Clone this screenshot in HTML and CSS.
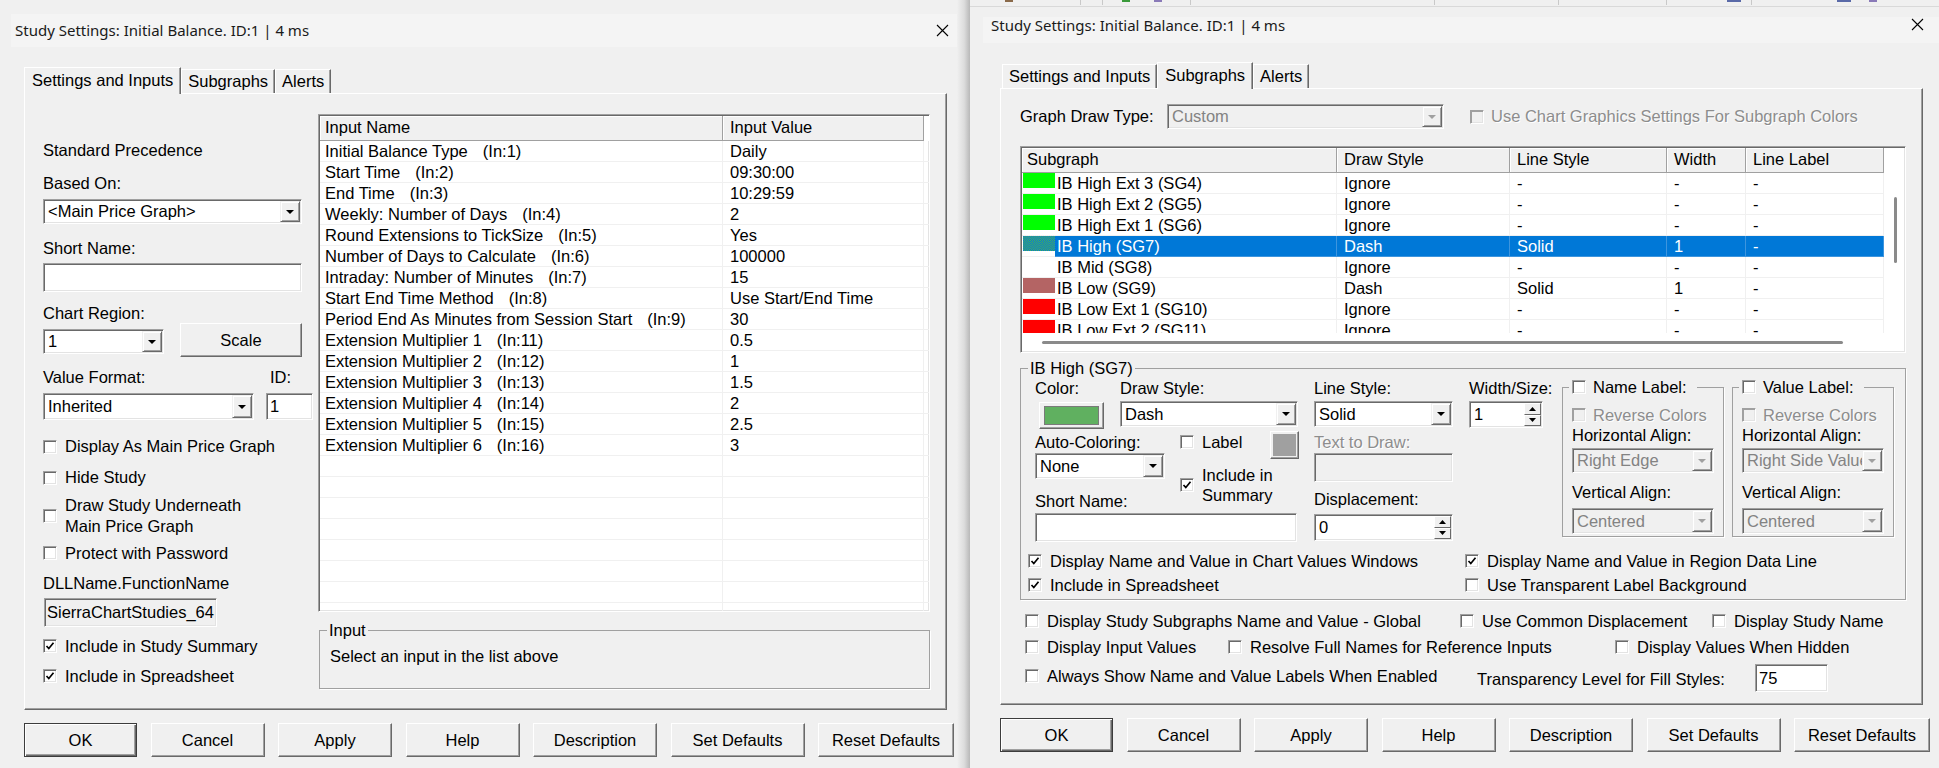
FILE: index.html
```html
<!DOCTYPE html>
<html>
<head>
<meta charset="utf-8">
<title>Study Settings</title>
<link rel="stylesheet" href="styles.css">
</head>
<body>
<div class="desk">
  <!-- left dialog: Settings and Inputs -->
  <div class="dlg dlg-left">
    <div class="titlebar">
      <span>Study Settings: Initial Balance. ID:1 | 4 ms</span>
      <span class="close"><svg width="13" height="13" viewBox="0 0 13 13"><path d="M1 1L12 12M12 1L1 12" stroke="#000" stroke-width="1.1"/></svg></span>
    </div>
    <div class="tabs">
      <div class="tab on">Settings and Inputs</div>
      <div class="tab">Subgraphs</div>
      <div class="tab">Alerts</div>
    </div>
    <div class="panel">
      <div class="lcol">
        <div>Standard Precedence</div>
        <div class="l-based">Based On:</div>
        <div class="combo sunk c-based"><div class="val">&lt;Main Price Graph&gt;</div><div class="dd"><svg width="8" height="4" viewBox="0 0 8 4"><path d="M0 0h8L4 4z"/></svg></div></div>
        <div class="l-short">Short Name:</div>
        <div class="field sunk f-short"></div>
        <div class="l-region">Chart Region:</div>
        <div class="region-row">
          <div class="combo sunk c-region"><div class="val">1</div><div class="dd"><svg width="8" height="4" viewBox="0 0 8 4"><path d="M0 0h8L4 4z"/></svg></div></div>
          <div class="btn b-scale">Scale</div>
        </div>
        <div class="fmt-lbls"><span class="l-fmt">Value Format:</span><span>ID:</span></div>
        <div class="fmt-row">
          <div class="combo sunk c-fmt"><div class="val">Inherited</div><div class="dd"><svg width="8" height="4" viewBox="0 0 8 4"><path d="M0 0h8L4 4z"/></svg></div></div>
          <div class="field sunk f-id">1</div>
        </div>
        <div class="chk k-main"><span class="cb"></span>Display As Main Price Graph</div>
        <div class="chk k-hide"><span class="cb"></span>Hide Study</div>
        <div class="chk k-under"><span class="cb"></span><span>Draw Study Underneath<br>Main Price Graph</span></div>
        <div class="chk k-pass"><span class="cb"></span>Protect with Password</div>
        <div class="l-dll">DLLName.FunctionName</div>
        <div class="field sunk f-dll">SierraChartStudies_64</div>
        <div class="chk k-summ"><span class="cb"><svg width="10" height="10" viewBox="0 0 10 10"><path d="M1.5 5l2.3 2.5L8.5 1.8" fill="none" stroke="#000" stroke-width="1.7"/></svg></span>Include in Study Summary</div>
        <div class="chk k-sheet"><span class="cb"><svg width="10" height="10" viewBox="0 0 10 10"><path d="M1.5 5l2.3 2.5L8.5 1.8" fill="none" stroke="#000" stroke-width="1.7"/></svg></span>Include in Spreadsheet</div>
      </div>
      <div class="rcol">
        <div class="list sunk in-list">
          <div class="lhead"><div>Input Name</div><div>Input Value</div><div class="blank"></div></div>
          <div class="lrow"><div>Initial Balance Type<span class="inn">(In:1)</span></div><div>Daily</div><div></div></div>
          <div class="lrow"><div>Start Time<span class="inn">(In:2)</span></div><div>09:30:00</div><div></div></div>
          <div class="lrow"><div>End Time<span class="inn">(In:3)</span></div><div>10:29:59</div><div></div></div>
          <div class="lrow"><div>Weekly: Number of Days<span class="inn">(In:4)</span></div><div>2</div><div></div></div>
          <div class="lrow"><div>Round Extensions to TickSize<span class="inn">(In:5)</span></div><div>Yes</div><div></div></div>
          <div class="lrow"><div>Number of Days to Calculate<span class="inn">(In:6)</span></div><div>100000</div><div></div></div>
          <div class="lrow"><div>Intraday: Number of Minutes<span class="inn">(In:7)</span></div><div>15</div><div></div></div>
          <div class="lrow"><div>Start End Time Method<span class="inn">(In:8)</span></div><div>Use Start/End Time</div><div></div></div>
          <div class="lrow"><div>Period End As Minutes from Session Start<span class="inn">(In:9)</span></div><div>30</div><div></div></div>
          <div class="lrow"><div>Extension Multiplier 1<span class="inn">(In:11)</span></div><div>0.5</div><div></div></div>
          <div class="lrow"><div>Extension Multiplier 2<span class="inn">(In:12)</span></div><div>1</div><div></div></div>
          <div class="lrow"><div>Extension Multiplier 3<span class="inn">(In:13)</span></div><div>1.5</div><div></div></div>
          <div class="lrow"><div>Extension Multiplier 4<span class="inn">(In:14)</span></div><div>2</div><div></div></div>
          <div class="lrow"><div>Extension Multiplier 5<span class="inn">(In:15)</span></div><div>2.5</div><div></div></div>
          <div class="lrow"><div>Extension Multiplier 6<span class="inn">(In:16)</span></div><div>3</div><div></div></div>
          <div class="lrow"><div></div><div></div><div></div></div>
          <div class="lrow"><div></div><div></div><div></div></div>
          <div class="lrow"><div></div><div></div><div></div></div>
          <div class="lrow"><div></div><div></div><div></div></div>
          <div class="lrow"><div></div><div></div><div></div></div>
          <div class="lrow"><div></div><div></div><div></div></div>
          <div class="lrow"><div></div><div></div><div></div></div>
          <div class="lrow"><div></div><div></div><div></div></div>
        </div>
        <fieldset class="grp in-grp">
          <legend>Input</legend>
          <div class="in-help">Select an input in the list above</div>
        </fieldset>
      </div>
    </div>
    <div class="btns">
      <div class="btn def b-ok">OK</div>
      <div class="btn b-std">Cancel</div>
      <div class="btn b-std">Apply</div>
      <div class="btn b-std">Help</div>
      <div class="btn b-desc">Description</div>
      <div class="btn b-set">Set Defaults</div>
      <div class="btn b-reset">Reset Defaults</div>
    </div>
  </div>

  <div class="wshadow"></div>

  <!-- right dialog: Subgraphs -->
  <div class="dlg dlg-right">
    <div class="appbar">
      <i class="ab ab-brown"></i><i class="ab-sep s1"></i><i class="ab-sep s2"></i><i class="ab ab-green"></i><i class="ab ab-purple"></i><i class="ab-sep s3"></i><i class="ab-sep s4"></i><i class="ab-sep s5"></i><i class="ab-sep s6"></i><i class="ab ab-blue b1"></i><i class="ab-sep s7"></i><i class="ab ab-blue b2"></i><i class="ab ab-purple p2"></i>
    </div>
    <div class="titlebar">
      <span>Study Settings: Initial Balance. ID:1 | 4 ms</span>
      <span class="close"><svg width="13" height="13" viewBox="0 0 13 13"><path d="M1 1L12 12M12 1L1 12" stroke="#000" stroke-width="1.1"/></svg></span>
    </div>
    <div class="tabs">
      <div class="tab">Settings and Inputs</div>
      <div class="tab on">Subgraphs</div>
      <div class="tab">Alerts</div>
    </div>
    <div class="panel">
      <div class="gdt">
        <div class="gdt-lbl">Graph Draw Type:</div>
        <div class="combo sunk off c-gdt"><div class="val">Custom</div><div class="dd"><svg width="8" height="4" viewBox="0 0 8 4"><path d="M0 0h8L4 4z" fill="#a0a0a0"/></svg></div></div>
        <div class="chk dis gdt-chk"><span class="cb"></span>Use Chart Graphics Settings For Subgraph Colors</div>
      </div>

      <div class="list sunk sg-list">
        <div class="sg-main">
          <div class="sg-cols">
            <div class="shead"><div>Subgraph</div><div>Draw Style</div><div>Line Style</div><div>Width</div><div>Line Label</div></div>
            <div class="srow"><div class="swc"><i class="sw sw-green"></i></div><div class="nm">IB High Ext 3 (SG4)</div><div>Ignore</div><div>-</div><div>-</div><div>-</div></div>
            <div class="srow"><div class="swc"><i class="sw sw-green"></i></div><div class="nm">IB High Ext 2 (SG5)</div><div>Ignore</div><div>-</div><div>-</div><div>-</div></div>
            <div class="srow"><div class="swc"><i class="sw sw-green"></i></div><div class="nm">IB High Ext 1 (SG6)</div><div>Ignore</div><div>-</div><div>-</div><div>-</div></div>
            <div class="srow sel"><div class="swc"><i class="sw sw-dith"></i></div><div class="nm">IB High (SG7)</div><div>Dash</div><div>Solid</div><div>1</div><div>-</div></div>
            <div class="srow"><div class="swc"></div><div class="nm">IB Mid (SG8)</div><div>Ignore</div><div>-</div><div>-</div><div>-</div></div>
            <div class="srow"><div class="swc"><i class="sw sw-rose"></i></div><div class="nm">IB Low (SG9)</div><div>Dash</div><div>Solid</div><div>1</div><div>-</div></div>
            <div class="srow"><div class="swc"><i class="sw sw-red"></i></div><div class="nm">IB Low Ext 1 (SG10)</div><div>Ignore</div><div>-</div><div>-</div><div>-</div></div>
            <div class="srow"><div class="swc"><i class="sw sw-red"></i></div><div class="nm">IB Low Ext 2 (SG11)</div><div>Ignore</div><div>-</div><div>-</div><div>-</div></div>
          </div>
          <div class="vscroll"><div class="vthumb"></div></div>
        </div>
        <div class="hscroll"><div class="hthumb"></div></div>
      </div>

      <fieldset class="grp sg-grp">
        <legend>IB High (SG7)</legend>
        <div class="sg-grid">
          <div class="g-color-l">Color:</div>
          <div class="btn g-color"><i></i></div>
          <div class="g-draw-l">Draw Style:</div>
          <div class="combo sunk g-draw"><div class="val">Dash</div><div class="dd"><svg width="8" height="4" viewBox="0 0 8 4"><path d="M0 0h8L4 4z"/></svg></div></div>
          <div class="g-line-l">Line Style:</div>
          <div class="combo sunk g-line"><div class="val">Solid</div><div class="dd"><svg width="8" height="4" viewBox="0 0 8 4"><path d="M0 0h8L4 4z"/></svg></div></div>
          <div class="g-wid-l">Width/Size:</div>
          <div class="spin sunk g-wid"><div class="val">1</div><div class="ud"><span><svg width="7" height="4" viewBox="0 0 7 4"><path d="M0 4h7L3.5 0z"/></svg></span><span><svg width="7" height="4" viewBox="0 0 7 4"><path d="M0 0h7L3.5 4z"/></svg></span></div></div>

          <div class="g-auto-l">Auto-Coloring:</div>
          <div class="chk g-label"><span class="cb"></span>Label</div>
          <div class="btn g-gray"><i></i></div>
          <div class="dis g-text-l">Text to Draw:</div>
          <div class="combo sunk g-auto"><div class="val">None</div><div class="dd"><svg width="8" height="4" viewBox="0 0 8 4"><path d="M0 0h8L4 4z"/></svg></div></div>
          <div class="chk g-incl"><span class="cb"><svg width="10" height="10" viewBox="0 0 10 10"><path d="M1.5 5l2.3 2.5L8.5 1.8" fill="none" stroke="#000" stroke-width="1.7"/></svg></span><span>Include in<br>Summary</span></div>
          <div class="field sunk off g-text"></div>

          <div class="g-short-l">Short Name:</div>
          <div class="g-disp-l">Displacement:</div>
          <div class="field sunk g-short"></div>
          <div class="spin sunk g-disp"><div class="val">0</div><div class="ud"><span><svg width="7" height="4" viewBox="0 0 7 4"><path d="M0 4h7L3.5 0z"/></svg></span><span><svg width="7" height="4" viewBox="0 0 7 4"><path d="M0 0h7L3.5 4z"/></svg></span></div></div>

          <fieldset class="grp lbox g-name">
            <legend><span class="cb"></span>Name Label:</legend>
            <div class="chk dis rev"><span class="cb"></span>Reverse Colors</div>
            <div class="ha-l">Horizontal Align:</div>
            <div class="combo sunk off ha"><div class="val">Right Edge</div><div class="dd"><svg width="8" height="4" viewBox="0 0 8 4"><path d="M0 0h8L4 4z" fill="#a0a0a0"/></svg></div></div>
            <div class="va-l">Vertical Align:</div>
            <div class="combo sunk off va"><div class="val">Centered</div><div class="dd"><svg width="8" height="4" viewBox="0 0 8 4"><path d="M0 0h8L4 4z" fill="#a0a0a0"/></svg></div></div>
          </fieldset>
          <fieldset class="grp lbox g-value">
            <legend><span class="cb"></span>Value Label:</legend>
            <div class="chk dis rev"><span class="cb"></span>Reverse Colors</div>
            <div class="ha-l">Horizontal Align:</div>
            <div class="combo sunk off ha"><div class="val">Right Side Value</div><div class="dd"><svg width="8" height="4" viewBox="0 0 8 4"><path d="M0 0h8L4 4z" fill="#a0a0a0"/></svg></div></div>
            <div class="va-l">Vertical Align:</div>
            <div class="combo sunk off va"><div class="val">Centered</div><div class="dd"><svg width="8" height="4" viewBox="0 0 8 4"><path d="M0 0h8L4 4z" fill="#a0a0a0"/></svg></div></div>
          </fieldset>
        </div>
        <div class="sg-checks">
          <div class="chk"><span class="cb"><svg width="10" height="10" viewBox="0 0 10 10"><path d="M1.5 5l2.3 2.5L8.5 1.8" fill="none" stroke="#000" stroke-width="1.7"/></svg></span>Display Name and Value in Chart Values Windows</div>
          <div class="chk"><span class="cb"><svg width="10" height="10" viewBox="0 0 10 10"><path d="M1.5 5l2.3 2.5L8.5 1.8" fill="none" stroke="#000" stroke-width="1.7"/></svg></span>Display Name and Value in Region Data Line</div>
          <div class="chk"><span class="cb"><svg width="10" height="10" viewBox="0 0 10 10"><path d="M1.5 5l2.3 2.5L8.5 1.8" fill="none" stroke="#000" stroke-width="1.7"/></svg></span>Include in Spreadsheet</div>
          <div class="chk"><span class="cb"></span>Use Transparent Label Background</div>
        </div>
      </fieldset>

      <div class="opts o1">
        <div class="chk"><span class="cb"></span>Display Study Subgraphs Name and Value - Global</div>
        <div class="chk"><span class="cb"></span>Use Common Displacement</div>
        <div class="chk"><span class="cb"></span>Display Study Name</div>
      </div>
      <div class="opts o2">
        <div class="chk"><span class="cb"></span>Display Input Values</div>
        <div class="chk"><span class="cb"></span>Resolve Full Names for Reference Inputs</div>
        <div class="chk"><span class="cb"></span>Display Values When Hidden</div>
      </div>
      <div class="opts o3">
        <div class="chk"><span class="cb"></span>Always Show Name and Value Labels When Enabled</div>
        <div class="tl">Transparency Level for Fill Styles:</div>
        <div class="field sunk f-trans">75</div>
      </div>
    </div>
    <div class="btns">
      <div class="btn def b-ok">OK</div>
      <div class="btn b-std">Cancel</div>
      <div class="btn b-std">Apply</div>
      <div class="btn b-std">Help</div>
      <div class="btn b-desc">Description</div>
      <div class="btn b-set">Set Defaults</div>
      <div class="btn b-reset">Reset Defaults</div>
    </div>
  </div>
</div>
</body>
</html>
```

FILE: styles.css
```css
*{
	margin: 0;
	padding: 0;
	box-sizing: border-box;
}
body{
	width: 1939px;
	height: 768px;
	overflow: hidden;
	background: #f0f0f0;
	color: #000;
	font-family: "Liberation Sans", Arial, sans-serif;
	font-size: 16.5px;
	line-height: 19px;
}
.desk{
	display: flex;
	height: 768px;
}
.dlg{
	flex: none;
	height: 768px;
}
.dlg-left{
	width: 957px;
}
.dlg-right{
	width: 969px;
}
.wshadow{
	flex: none;
	width: 13px;
	background: linear-gradient(to right, #f0f0f0, #dcdcdc 55%, #b8b8b8);
}

/* title bars */
.titlebar{
	display: flex;
	justify-content: space-between;
	background: #f4f4f4;
	font-family: "Noto Sans", "Liberation Sans", sans-serif;
	font-size: 15px;
	color: #1a1a1a;
}
.dlg-left .titlebar{
	margin: 14px 0 0 11px;
	height: 33px;
	align-items: center;
	padding-left: 4px;
}
.dlg-right .titlebar{
	margin: 10px 0 0 13px;
	height: 26px;
	align-items: flex-start;
	padding-left: 8px;
	line-height: 17px;
}
.close{
	display: flex;
	justify-content: center;
	width: 30px;
}
.dlg-right .close{
	width: 44px;
	padding-top: 1px;
}

/* strip of the app behind the right dialog */
.appbar{
	display: flex;
	align-items: flex-start;
	height: 7px;
	border-bottom: 1px solid #d9d9d9;
}
.appbar i{
	display: block;
	flex: none;
}
.ab{
	width: 8px;
	height: 2px;
}
.ab-sep{
	width: 1px;
	height: 5px;
	background: #c9c9c9;
}
.ab-brown{ background: #8a6a4a; margin-left: 35px; }
.s1{ margin-left: 67px; }
.s2{ margin-left: 21px; }
.ab-green{ background: #3a9a3a; margin-left: 19px; }
.ab-purple{ background: #8a7ab8; margin-left: 24px; }
.s3{ margin-left: 28px; }
.s4{ margin-left: 243px; }
.s5{ margin-left: 123px; }
.s6{ margin-left: 107px; }
.ab-blue{ background: #5a6aa8; width: 14px; }
.b1{ margin-left: 60px; }
.s7{ margin-left: 10px; }
.b2{ margin-left: 85px; }
.p2{ margin-left: 18px; }

/* tabs */
.tabs{
	display: flex;
	align-items: flex-end;
	height: 26px;
	position: relative;
	z-index: 1;
}
.dlg-left .tabs{
	margin: 20px 0 0 24px;
}
.dlg-right .tabs{
	margin: 19px 0 0 32px;
}
.tab{
	height: 24px;
	padding: 0 6px;
	line-height: 23px;
	white-space: nowrap;
	border: 1px solid;
	border-bottom: 0;
	border-color: #fff #696969 #fff #fff;
	box-shadow: inset -1px 0 #a0a0a0;
}
.tab.on{
	height: 27px;
	margin-bottom: -1px;
	padding: 1px 7px 0;
	background: #f0f0f0;
}

/* tab page */
.panel{
	width: 923px;
	height: 617px;
	border: 1px solid;
	border-color: #fff #696969 #696969 #fff;
	box-shadow: inset -1px -1px #a0a0a0;
}
.dlg-left .panel{
	margin-left: 24px;
	display: flex;
}
.dlg-right .panel{
	margin-left: 30px;
	padding-left: 19px;
}

/* bottom buttons */
.btns{
	display: flex;
	gap: 13.5px;
	margin-top: 13px;
}
.dlg-left .btns{ margin-left: 24px; }
.dlg-right .btns{ margin-left: 30px; }
.btn{
	display: flex;
	align-items: center;
	justify-content: center;
	height: 34px;
	background: #f0f0f0;
	border: 1px solid;
	border-color: #fff #696969 #696969 #fff;
	box-shadow: inset -1px -1px #a0a0a0;
	white-space: nowrap;
}
.btn.def{
	border-color: #3c3c3c;
	box-shadow: inset 1px 1px #fff, inset -1px -1px #696969, inset -2px -2px #a0a0a0;
}
.b-ok{ width: 113px; }
.b-std{ width: 114px; }
.b-desc{ width: 124px; }
.b-set{ width: 134px; }
.b-reset{ width: 136px; }

/* sunken controls */
.sunk{
	border: 1px solid;
	border-color: #a0a0a0 #fff #fff #a0a0a0;
	box-shadow: inset 1px 1px #696969, inset -1px -1px #e3e3e3;
	padding: 1px;
	background: #fff;
}
.combo, .spin{
	display: flex;
	align-items: stretch;
}
.combo .val, .spin .val{
	flex: 1;
	display: flex;
	align-items: center;
	padding-left: 3px;
	white-space: nowrap;
	overflow: hidden;
}
.combo .dd{
	flex: none;
	width: 20px;
	display: flex;
	align-items: center;
	justify-content: center;
	background: #f0f0f0;
	border: 1px solid;
	border-color: #f0f0f0 #696969 #696969 #f0f0f0;
	box-shadow: inset 1px 1px #fff, inset -1px -1px #a0a0a0;
}
.combo.off, .field.off{
	background: #f0f0f0;
	color: #838383;
}
.spin .ud{
	flex: none;
	width: 17px;
	display: flex;
	flex-direction: column;
}
.spin .ud span{
	flex: 1;
	display: flex;
	align-items: center;
	justify-content: center;
	background: #f0f0f0;
	border: 1px solid;
	border-color: #fff #696969 #696969 #fff;
}
.field{
	display: flex;
	align-items: center;
	padding-left: 3px;
	white-space: nowrap;
	overflow: hidden;
}

/* checkboxes */
.chk{
	display: flex;
	align-items: center;
	gap: 8px;
	white-space: nowrap;
}
.cb{
	flex: none;
	width: 14px;
	height: 14px;
	display: flex;
	align-items: center;
	justify-content: center;
	background: #fff;
	border: 1px solid;
	border-color: #a0a0a0 #fff #fff #a0a0a0;
	box-shadow: inset 1px 1px #696969, inset -1px -1px #e3e3e3;
}
.dis{
	color: #8d8d8d;
	text-shadow: 1px 1px #fff;
}
.dis .cb{
	background: #f0f0f0;
	box-shadow: inset 1px 1px #a0a0a0, inset -1px -1px #e3e3e3;
}

/* group boxes */
.grp{
	border: 1px solid #a0a0a0;
	box-shadow: 1px 1px 0 #fff;
}
.grp legend{
	padding: 0 2px;
	line-height: 19px;
}

/* left page, left column */
.lcol{
	flex: none;
	width: 275px;
	margin-left: 18px;
	padding-top: 46.5px;
	display: flex;
	flex-direction: column;
	align-items: flex-start;
}
.l-based{ margin-top: 14px; }
.c-based{ width: 259px; height: 25px; margin-top: 6.5px; }
.l-short{ margin-top: 14.5px; }
.f-short{ width: 259px; height: 29px; margin-top: 5.5px; }
.l-region{ margin-top: 11.5px; }
.region-row{
	display: flex;
	align-items: flex-start;
	margin-top: 0.5px;
}
.c-region{ width: 121px; height: 25px; margin-top: 6px; }
.b-scale{ width: 122px; margin-left: 16px; }
.fmt-lbls{
	display: flex;
	margin-top: 11px;
}
.l-fmt{ width: 227px; }
.fmt-row{
	display: flex;
	margin-top: 6px;
}
.c-fmt{ width: 211px; height: 27px; }
.f-id{ width: 47px; height: 27px; margin-left: 12px; }
.k-main{ margin-top: 17px; }
.k-hide{ margin-top: 12px; }
.k-under{ margin-top: 8px; line-height: 20.5px; }
.k-pass{ margin-top: 7.5px; }
.l-dll{ margin-top: 11px; }
.f-dll{ width: 173px; height: 29px; margin: 5.5px 0 0 1px; padding-left: 2px; background: #f0f0f0; }
.k-summ{ margin-top: 9.5px; }
.k-sheet{ margin-top: 11px; }

/* left page, inputs list */
.rcol{
	flex: none;
	width: 612px;
	margin-top: 20px;
}
.list{
	overflow: hidden;
}
.in-list{
	height: 498px;
}
.lhead, .lrow{
	display: grid;
	grid-template-columns: 403px 201px 1fr;
}
.lhead{
	height: 25px;
}
.lhead div, .shead div{
	background: #f0f0f0;
	border-right: 1px solid #a0a0a0;
	border-bottom: 1px solid #a0a0a0;
	box-shadow: inset 1px 1px #fff;
	padding-left: 7px;
	line-height: 23px;
	white-space: nowrap;
}
.lhead div:first-child, .shead div:first-child{
	padding-left: 5px;
}
.lhead .blank{
	background: #fff;
	border: 0;
	box-shadow: none;
}
.lrow{
	height: 21px;
}
.lrow div, .srow div{
	border-right: 1px solid #f0f0f0;
	border-bottom: 1px solid #f0f0f0;
	padding-left: 7px;
	line-height: 20px;
	white-space: nowrap;
	overflow: hidden;
}
.lrow div:first-child{
	padding-left: 5px;
}
.inn{
	margin-left: 15px;
}
.in-grp{
	width: 611px;
	height: 68px;
	margin: 8.5px 0 0 1px;
	padding: 0 7px;
}
.in-help{
	padding: 7px 0 0 3px;
}

/* right page */
.gdt{
	display: flex;
	align-items: center;
	height: 25px;
	margin-top: 15px;
}
.gdt-lbl{ width: 147px; }
.c-gdt{ width: 277px; height: 25px; }
.gdt-chk{ margin-left: 26px; gap: 7px; }

.sg-list{
	width: 886px;
	height: 207px;
	margin-top: 17px;
}
.sg-main{
	display: flex;
	height: 185px;
}
.sg-cols{
	flex: none;
	width: 862px;
	overflow: hidden;
}
.shead{
	display: grid;
	grid-template-columns: 315px 173px 157px 79px 138px;
	height: 25px;
}
.srow{
	display: grid;
	grid-template-columns: 33px 282px 173px 157px 79px 138px;
	height: 21px;
}
.srow .swc{
	padding-left: 1px;
	border-right: 0;
}
.srow .nm{
	padding-left: 2px;
}
.sw{
	display: block;
	width: 32px;
	height: 15px;
}
.sw-green{ background: #00ff00; }
.sw-red{ background: #ff0000; }
.sw-rose{ background: #b46464; }
.sw-dith{ background: repeating-conic-gradient(#40b060 0 25%, #0a78d0 0 50%) 0 0 / 2px 2px; }
.srow.sel div:not(.swc){
	background: #0078d7;
	color: #fff;
	border-color: #3d95de;
}
.vscroll{
	flex: 1;
}
.vthumb{
	width: 3px;
	height: 66px;
	margin: 49px 0 0 10px;
	background: #8a8a8a;
	border-radius: 2px;
}
.hscroll{
	height: 18px;
	padding: 8px 0 0 20px;
}
.hthumb{
	width: 801px;
	height: 3px;
	background: #8a8a8a;
	border-radius: 2px;
}

/* IB High (SG7) group */
.sg-grp{
	width: 886px;
	height: 241.5px;
	margin-top: 5.5px;
	padding: 0 7px;
}
.sg-grid{
	display: grid;
	margin-left: 7px;
	grid-template-columns: 85px 60px 90px 44px 155px 93px 170px 162px;
	grid-template-rows: 21px 31px 22px 34px 25.5px 34px;
	align-items: start;
}
.g-color-l{ grid-area: 1 / 1; align-self: center; }
.g-color{ grid-area: 2 / 1; width: 65px; height: 27px; margin: 3.5px 0 0 4px; padding: 3px 4px; }
.g-color i{ display: block; width: 100%; height: 100%; background: #60b060; border: 1px solid #7a7a7a; }
.g-draw-l{ grid-area: 1 / 2 / 2 / 5; align-self: center; }
.g-draw{ grid-area: 2 / 2 / 3 / 5; width: 178px; height: 26px; margin-top: 2.5px; }
.g-line-l{ grid-area: 1 / 5; align-self: center; }
.g-line{ grid-area: 2 / 5; width: 139px; height: 26px; margin-top: 2.5px; }
.g-wid-l{ grid-area: 1 / 6; align-self: center; }
.g-wid{ grid-area: 2 / 6; width: 74px; height: 27px; margin-top: 2.5px; }
.g-auto-l{ grid-area: 3 / 1 / 4 / 3; align-self: end; }
.g-label{ grid-area: 3 / 3; align-self: end; }
.g-gray{ grid-area: 3 / 4 / 5 / 5; width: 29px; height: 28px; margin-top: 1.5px; padding: 2px; }
.g-gray i{ display: block; width: 100%; height: 100%; background: #a0a0a0; }
.g-text-l{ grid-area: 3 / 5; align-self: end; }
.g-auto{ grid-area: 4 / 1 / 5 / 3; width: 130px; height: 26px; margin-top: 1.5px; }
.g-incl{ grid-area: 4 / 3 / 6 / 4; margin-top: 13.5px; line-height: 20px; }
.g-text{ grid-area: 4 / 5; width: 139px; height: 29px; margin-top: 1.5px; }
.g-short-l{ grid-area: 5 / 1 / 6 / 3; align-self: end; }
.g-disp-l{ grid-area: 5 / 5; align-self: end; margin-bottom: 2px; }
.g-short{ grid-area: 6 / 1 / 7 / 5; width: 262px; height: 29px; margin-top: 2px; }
.g-disp{ grid-area: 6 / 5; width: 139px; height: 27px; margin-top: 3px; }
.g-name{ grid-area: 1 / 7 / 7 / 8; }
.g-value{ grid-area: 1 / 8 / 7 / 9; }

.lbox{
	width: 162px;
	height: 159.5px;
	padding: 0 9px;
}
.lbox legend{
	display: flex;
	align-items: center;
	gap: 7px;
	padding: 0 10px 0 3px;
	margin-left: -3px;
}
.rev{ margin-top: 9px; gap: 7px; }
.ha-l{ margin-top: 1px; }
.ha{ width: 142px; height: 25px; margin-top: 3.5px; }
.va-l{ margin-top: 9.5px; }
.va{ width: 142px; height: 26px; margin-top: 6.5px; }

.sg-checks{
	display: grid;
	grid-template-columns: 437px auto;
	row-gap: 5px;
	margin-top: 6.5px;
}

/* global options */
.opts{
	display: grid;
	margin-left: 5px;
}
.o1{
	grid-template-columns: 435px 252px auto;
	margin-top: 11.5px;
}
.o2{
	grid-template-columns: 203px 387px auto;
	margin-top: 7px;
}
.o3{
	grid-template-columns: 452px 278px 73px;
	margin-top: 7.5px;
	align-items: start;
}
.o3 .chk{ margin-top: 2.5px; }
.o3 .tl{ margin-top: 5.5px; }
.f-trans{ height: 28px; }
```
